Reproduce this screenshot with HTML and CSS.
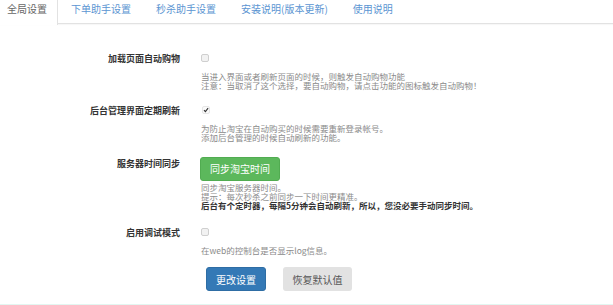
FILE: index.html
```html
<!DOCTYPE html>
<html lang="zh-CN">
<head>
<meta charset="utf-8">
<title>全局设置</title>
<link rel="stylesheet" href="styles.css">
</head>
<body>
<ul class="tabs">
  <li class="tab active"><a>全局设置</a></li>
  <li class="tab"><a>下单助手设置</a></li>
  <li class="tab"><a>秒杀助手设置</a></li>
  <li class="tab"><a>安装说明(版本更新)</a></li>
  <li class="tab"><a>使用说明</a></li>
</ul>
<form class="form">
  <div class="row row-1">
    <div class="label">加载页面自动购物</div>
    <div class="field">
      <div class="control"><span class="check"></span></div>
      <div class="help">
        <p>当进入界面或者刷新页面的时候，则触发自动购物功能</p>
        <p>注意：当取消了这个选择，要自动购物，请点击功能的图标触发自动购物！</p>
      </div>
    </div>
  </div>
  <div class="row row-2">
    <div class="label">后台管理界面定期刷新</div>
    <div class="field">
      <div class="control"><span class="check checked"><svg viewBox="0 0 8 8" width="8" height="8"><path d="M1.3 4.2 L3.2 6.1 L6.8 1.6" fill="none" stroke="#333" stroke-width="1.5"/></svg></span></div>
      <div class="help">
        <p>为防止淘宝在自动购买的时候需要重新登录帐号。</p>
        <p>添加后台管理的时候自动刷新的功能。</p>
      </div>
    </div>
  </div>
  <div class="row row-3">
    <div class="label label-btn">服务器时间同步</div>
    <div class="field">
      <div class="control-btn"><button type="button" class="btn btn-green">同步淘宝时间</button></div>
      <div class="help help-3">
        <p>同步淘宝服务器时间。</p>
        <p>提示：每次秒杀之前同步一下时间更精准。</p>
        <p class="strong">后台有个定时器，每隔5分钟会自动刷新，所以，您没必要手动同步时间。</p>
      </div>
    </div>
  </div>
  <div class="row row-4">
    <div class="label">启用调试模式</div>
    <div class="field">
      <div class="control"><span class="check"></span></div>
      <div class="help">
        <p>在web的控制台是否显示log信息。</p>
      </div>
    </div>
  </div>
  <div class="actions">
    <button type="button" class="btn btn-blue">更改设置</button>
    <button type="button" class="btn btn-gray">恢复默认值</button>
  </div>
</form>
<div class="bottom-line"></div>
</body>
</html>
```
FILE: styles.css
```css
* { box-sizing: border-box; }
html, body { margin: 0; padding: 0; background: #fff; }
body {
  font-family: "Noto Sans CJK SC", "Noto Sans", sans-serif;
  color: #333;
  width: 613px;
  height: 305px;
  overflow: hidden;
}
p { margin: 0; }

.tabs {
  list-style: none;
  margin: 0;
  padding: 0;
  display: flex;
  height: 24px;
  border-bottom: 1px solid #e2e2e2;
  box-shadow: 0 1px 1px rgba(0,0,0,0.03);
}
.tab {
  height: 24px;
  padding: 0 12.5px;
  font-size: 10px;
  line-height: 17px;
  color: #5b95d2;
  white-space: nowrap;
}
.tab.active {
  color: #666;
  background: #fff;
  padding: 0 10px 0 7px;
  border-right: 1px solid #e2e2e2;
  height: 25px;
  margin-bottom: -1px;
  margin-right: 0.5px;
}

.row {
  display: grid;
  grid-template-columns: 180px 1fr;
  column-gap: 21px;
}
.row-1 { margin-top: 30px; }
.row-2 { margin-top: 17px; }
.row-3 { margin-top: 13px; }
.row-4 { margin-top: 18px; }

.label {
  text-align: right;
  font-weight: 700;
  font-size: 9px;
  line-height: 10px;
  color: #333;
  white-space: nowrap;
}
.label-btn { padding-top: 5px; }

.control {
  height: 10px;
  display: flex;
  align-items: center;
}
.check {
  width: 8px;
  height: 8px;
  border: 1px solid #cfcfcf;
  border-radius: 2px;
  background: #f2f2f2;
  display: inline-flex;
  align-items: center;
  justify-content: center;
  margin-top: -2px;
}
.check.checked {
  border-color: #e6e6e6;
  background: #fafafa;
  margin-left: 1px;
}
.check svg { display: block; }

.help {
  margin-top: 8px;
  font-size: 8.5px;
  line-height: 8.5px;
  color: #8a8a8a;
  white-space: nowrap;
}
.help-3 {
  margin-top: 2px;
  line-height: 9px;
}
.help .strong {
  font-weight: 700;
  color: #333;
}

.btn {
  font-family: inherit;
  font-size: 10px;
  height: 24px;
  border: none;
  border-radius: 3px;
  padding: 0;
  cursor: pointer;
}
.btn-green {
  width: 80px;
  margin-left: -1px;
  background: #5cb85c;
  color: #fff;
  border: 1px solid #51ac51;
}
.btn-blue {
  width: 60px;
  background: #3479b6;
  color: #fff;
  border: 1px solid #2e6da4;
}
.btn-gray {
  width: 69px;
  background: #e2e2e2;
  color: #555;
}

.actions {
  margin-top: 13px;
  padding-left: 206px;
  display: flex;
  gap: 17px;
}

.bottom-line {
  margin-top: 13px;
  height: 3px;
  background: #e3f6f1;
}
```
